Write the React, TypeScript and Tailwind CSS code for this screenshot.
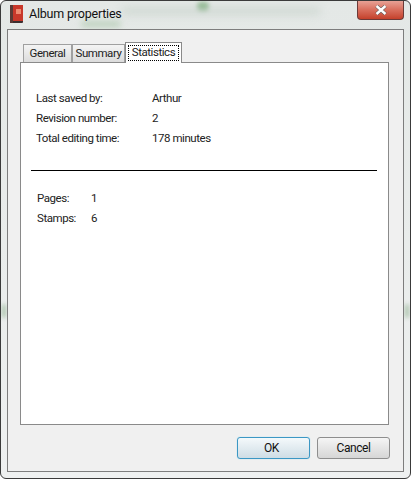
import React from 'react';

const uiFont = 'font-["Roboto","Noto_Sans",sans-serif]';

function Row({ label, value, labelWidth }: { label: string; value: string; labelWidth: string }) {
  return (
    <div className="flex h-[20px] items-center">
      <span className={labelWidth}>{label}</span>
      <span>{value}</span>
    </div>
  );
}

function Tab({ label, active, width }: { label: string; active?: boolean; width: string }) {
  if (active) {
    return (
      <div className={`${width} relative z-10 -mb-px flex h-[21px] items-center justify-center border border-b-0 border-[#8a8a8a] bg-white`}>
        <span className="border border-dotted border-black px-[3px] pb-px leading-[13px] text-[#222]">{label}</span>
      </div>
    );
  }
  return (
    <div className={`${width} flex h-[18px] items-center justify-center self-end border border-b-0 border-[#a0a0a0] bg-gradient-to-b from-[#f4f4f4] to-[#dcdcdc] text-[#222]`}>
      {label}
    </div>
  );
}

function AlbumIcon() {
  return (
    <svg width="16" height="20" viewBox="0 0 16 20" className="shrink-0">
      <rect x="1" y="1" width="13" height="18" rx="1" fill="#3c3030" />
      <rect x="4" y="1" width="10" height="16" fill="#c8382a" />
      <rect x="1" y="1" width="3" height="18" fill="#5a3a35" />
      <rect x="7" y="5" width="5" height="5" fill="#ee8a70" />
    </svg>
  );
}

export default function App() {
  return (
    <div className={`${uiFont} relative flex h-[479px] w-[411px] flex-col overflow-hidden rounded-[6px] border border-[#3a3a3a] bg-gradient-to-b from-[#e4e8e6] to-[#eef0f0] text-[11.5px] tracking-[-0.45px] text-[#222]`}>
      {/* blurred desktop showing through the glass */}
      <div className="absolute left-[80px] top-[20px] h-[6px] w-[40px] rounded-full bg-[#9fc09f] opacity-60 blur-[3px]" />
      <div className="absolute left-[196px] top-[1px] h-[9px] w-[12px] rounded-full bg-[#6aa56a] opacity-70 blur-[2px]" />
      <div className="absolute left-[120px] top-[6px] h-[8px] w-[200px] rounded-full bg-[#c4d0c8] opacity-60 blur-[4px]" />
      <div className="absolute left-[1px] top-[303px] h-[14px] w-[4px] rounded-full bg-[#8fb08f] opacity-70 blur-[2px]" />
      <div className="absolute right-[1px] top-[303px] h-[14px] w-[4px] rounded-full bg-[#8fb08f] opacity-70 blur-[2px]" />

      {/* title bar */}
      <div className="relative flex h-[28px] shrink-0 items-start pl-[8px] pt-[3px]">
        <AlbumIcon />
        <span className="ml-[4px] mt-[2px] text-[12.5px] leading-[16px] tracking-[-0.2px] text-[#111]">Album properties</span>
        <div className="absolute right-[6px] top-[-1px] flex h-[20px] w-[47px] items-center justify-center rounded-b-[4px] border border-t-0 border-[#6b3a38] bg-gradient-to-b from-[#e8a79c] via-[#d9705f] to-[#c4402a]">
          <svg width="14" height="10" viewBox="0 0 14 10">
            <path d="M2.5 1 L11.5 9 M11.5 1 L2.5 9" stroke="#555" strokeWidth="3.6" />
            <path d="M2.5 1 L11.5 9 M11.5 1 L2.5 9" stroke="#fff" strokeWidth="2.4" />
          </svg>
        </div>
      </div>

      {/* client area */}
      <div className="relative mx-[6px] mb-[6px] flex flex-1 flex-col border border-[#7d7d7d] bg-[#f0f0f0] pl-[12px] pr-[14px] pt-[12px]">
        <div className="flex h-[20px] items-end pl-[3px]">
          <Tab label="General" width="w-[49px]" />
          <Tab label="Summary" width="w-[53px]" />
          <Tab label="Statistics" active width="w-[57px]" />
        </div>

        <div className="flex h-[363px] flex-col border border-[#8a8a8a] bg-white pt-[26px]">
          <div className="pl-[15px]">
            <Row label="Last saved by:" value="Arthur" labelWidth="w-[116px]" />
            <Row label="Revision number:" value="2" labelWidth="w-[116px]" />
            <Row label="Total editing time:" value="178 minutes" labelWidth="w-[116px]" />
          </div>
          <div className="ml-[10px] mr-[11px] mt-[21px] h-px bg-black" />
          <div className="mt-[18px] pl-[16px]">
            <Row label="Pages:" value="1" labelWidth="w-[54px]" />
            <Row label="Stamps:" value="6" labelWidth="w-[54px]" />
          </div>
        </div>

        <div className="-mr-px flex justify-end gap-[7px] pt-[12px]">
          <button className="flex h-[22px] w-[73px] items-center justify-center rounded-[3px] border border-[#3c97c4] bg-gradient-to-b from-[#f4f9fb] to-[#cfdde5] pr-[4px] text-[12px] text-[#111] shadow-[0_0_1px_#7fd0ee]">
            OK
          </button>
          <button className="flex h-[22px] w-[73px] items-center justify-center rounded-[3px] border border-[#8e8e8e] bg-gradient-to-b from-[#f5f5f5] to-[#d6d6d6] text-[12px] text-[#111]">
            Cancel
          </button>
        </div>
      </div>
    </div>
  );
}
